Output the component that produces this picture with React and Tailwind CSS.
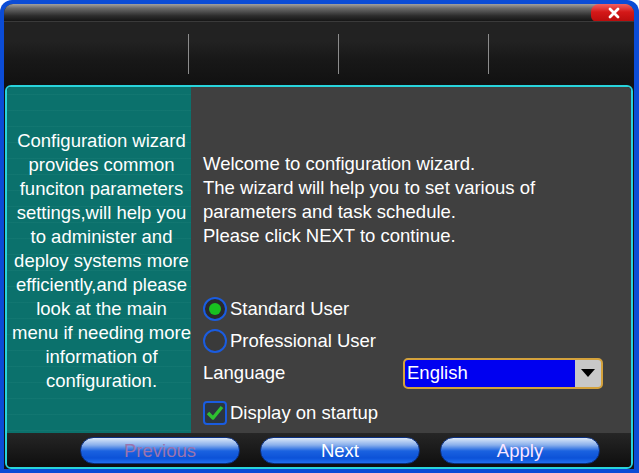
import React from "react";

const leftLines = [
  "Configuration wizard",
  "provides common",
  "funciton parameters",
  "settings,will help you",
  "to administer and",
  "deploy systems more",
  "efficiently,and please",
  "look at the main",
  "menu if needing more",
  "information of",
  "configuration.",
];

function GlossyButton({ label, textClass }) {
  return (
    <div className="relative w-[160px] h-[27px] rounded-full border border-[#0a2f80] bg-[linear-gradient(to_bottom,#dce8f8_0%,#8ab0ec_28%,#1a62e0_52%,#0c52d8_80%,#2070f0_100%)] flex items-center justify-center overflow-hidden">
      <span className={`relative text-[18.5px] leading-none pt-[2px] ${textClass}`}>{label}</span>
    </div>
  );
}

export default function App() {
  return (
    <div
      className="w-[639px] h-[473px] bg-[#0b4cd6] rounded-t-[12px] pt-[4px] pl-[4px] pr-[5px] pb-[4px] flex flex-col"
      style={{ fontFamily: '"Liberation Sans", Arial, sans-serif' }}
    >
      <div className="flex-1 flex flex-col bg-[#121212] rounded-t-[9px] overflow-hidden">
        {/* title bar */}
        <div className="h-[17px] flex justify-end bg-[linear-gradient(to_bottom,#a0a0a0_0%,#6a6a6a_25%,#2c2c2c_70%,#161616_100%)]">
          <div className="w-[45px] h-[18px] mr-[-2px] rounded-tl-[8px] rounded-bl-[6px] rounded-br-[6px] bg-[linear-gradient(to_bottom,#f06060_0%,#d41818_45%,#b80c0c_100%)] flex items-center justify-center">
            <svg width="12" height="12" viewBox="0 0 12 12">
              <path d="M2 2 L10 10 M10 2 L2 10" stroke="#ffffff" strokeWidth="2.8" strokeLinecap="round" />
            </svg>
          </div>
        </div>
        {/* top tool area */}
        <div className="h-[64px] border-t border-[#3a3a3a] bg-[linear-gradient(to_bottom,#222222_0%,#222222_30%,#181818_60%,#111111_100%)] flex items-center pl-[184px] gap-[149px]">
          <div className="w-px h-[40px] bg-[#8c8c8c]" />
          <div className="w-px h-[40px] bg-[#8c8c8c]" />
          <div className="w-px h-[40px] bg-[#8c8c8c]" />
        </div>
        {/* main panel */}
        <div className="flex-1 mx-[1px] border-2 border-[#28d4dc] rounded-[6px] flex flex-col overflow-hidden text-white">
          <div className="flex-1 flex">
            <div className="w-[184px] bg-[#0b716c] bg-[repeating-linear-gradient(to_bottom,transparent_0px,transparent_7px,rgba(120,200,190,0.06)_7px,rgba(120,200,190,0.06)_8px,transparent_8px,transparent_16px)] flex flex-col items-center pt-[42px] pl-[5px] text-[18.5px] leading-[24px] text-center">
              {leftLines.map((l) => (
                <div key={l} className="whitespace-nowrap">{l}</div>
              ))}
            </div>
            <div className="flex-1 bg-[#404040] pl-[12px] pt-[65px] text-[18.5px] leading-[24px]">
              <div>Welcome to configuration wizard.</div>
              <div>The wizard will help you to set various of</div>
              <div>parameters and task schedule.</div>
              <div>Please click NEXT to continue.</div>

              <div className="mt-[45px] h-[32px] flex items-center">
                <div className="w-[24px] h-[24px] rounded-full border-2 border-[#1a5ce0] bg-[#2a2a2a] flex items-center justify-center">
                  <div className="w-[12px] h-[12px] rounded-full bg-[#18c020]" />
                </div>
                <span className="ml-[3px]">Standard User</span>
              </div>
              <div className="h-[32px] flex items-center">
                <div className="w-[24px] h-[24px] rounded-full border-2 border-[#1a5ce0] bg-[#3a3a3a]" />
                <span className="ml-[3px]">Professional User</span>
              </div>
              <div className="h-[32px] flex items-center">
                <span className="w-[200px]">Language</span>
                <div className="w-[200px] h-[31px] rounded-[5px] border-2 border-[#d4a23c] bg-[#c8c8c8] flex overflow-hidden">
                  <div className="flex-1 bg-[#0000f0] flex items-center pl-[2px]">English</div>
                  <div className="w-[26px] flex items-center justify-center">
                    <svg width="16" height="10" viewBox="0 0 16 10">
                      <path d="M1 1 L15 1 L8 9 Z" fill="#000000" />
                    </svg>
                  </div>
                </div>
              </div>
              <div className="mt-[8px] h-[32px] flex items-center">
                <div className="w-[24px] h-[24px] rounded-[4px] border-2 border-[#1a5ce0] bg-[#2c3640] flex items-center justify-center">
                  <svg width="18" height="16" viewBox="0 0 18 16">
                    <path d="M2 8 L7 13 L16 2" stroke="#2ec030" strokeWidth="3.4" fill="none" strokeLinejoin="round" />
                  </svg>
                </div>
                <span className="ml-[3px]">Display on startup</span>
              </div>
            </div>
          </div>
          {/* bottom bar */}
          <div className="h-[34px] bg-[linear-gradient(to_bottom,#262626_0%,#1a1a1a_50%,#0e0e0e_100%)] flex items-center pl-[73px] gap-[20px]">
            <GlossyButton label="Previous" textClass="text-[#9a74ae]" />
            <GlossyButton label="Next" textClass="text-white" />
            <GlossyButton label="Apply" textClass="text-[#fbe6ff]" />
          </div>
        </div>
      </div>
    </div>
  );
}
